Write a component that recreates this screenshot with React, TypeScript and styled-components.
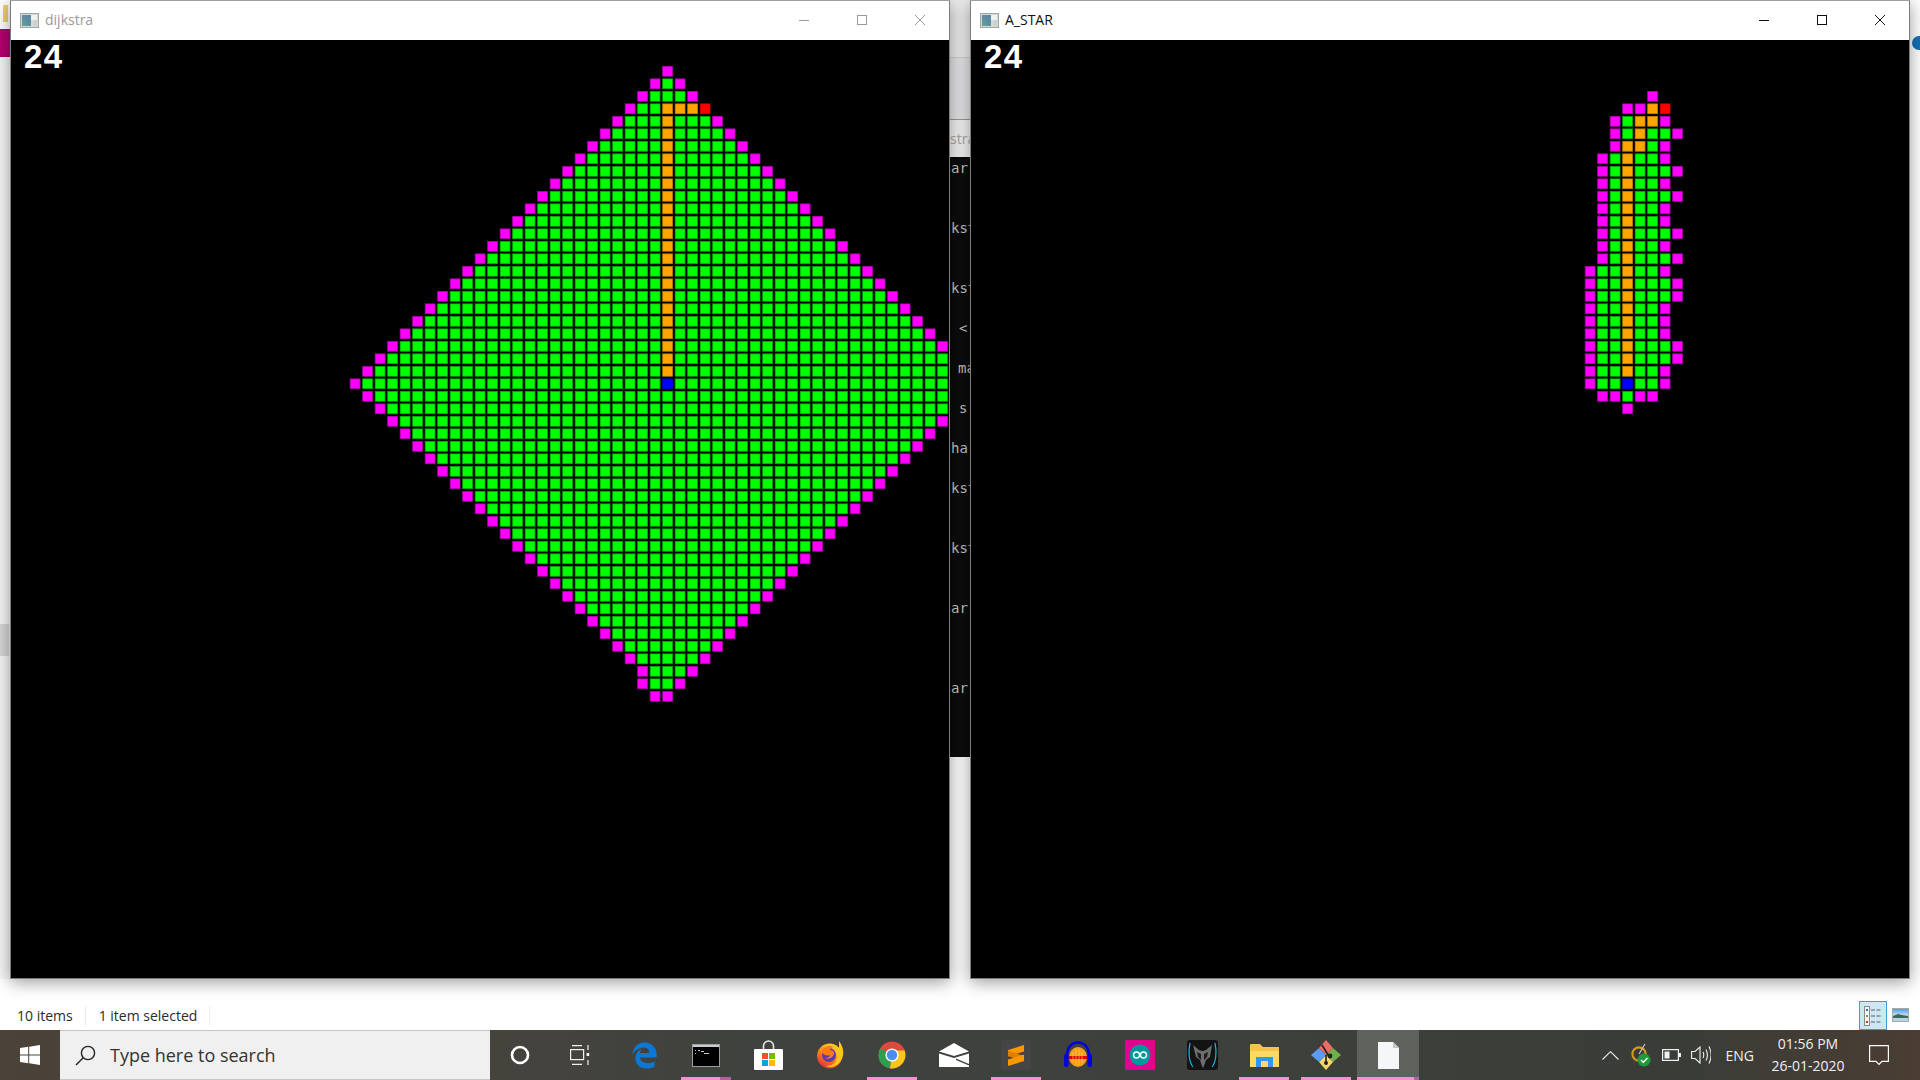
/***** IMPORTS *****/
import React from 'react';
import styled, { createGlobalStyle } from 'styled-components';
import { FaEdgeLegacy } from 'react-icons/fa6';


/***** DATA *****/
type Cell = 'M' | 'G' | 'O' | 'R' | 'B';
type Placed = { col: number; row: number; kind: Cell };

const CELL = 12.5;
const FILL: Record<Cell, string> = { M: '#ff00ff', G: '#00ff00', O: '#ffa500', R: '#ff0000', B: '#0000ff' };
const EDGE: Record<Cell, string> = { M: '#b000b0', G: '#00b000', O: '#c08000', R: '#d00000', B: '#0000d0' };

const dijkstraCells = (): Placed[] => {
    const cells: Placed[] = [];
    for (let row = 0; row < 75; row++) {
        for (let col = 0; col < 75; col++) {
            const dist = Math.abs(col - 52) + Math.abs(row - 27);
            let kind: Cell | null = dist < 25 ? 'G' : dist === 25 ? 'M' : null;
            if (col === 51 && row === 51) kind = 'G';
            if ((col === 50 && row === 51) || (col === 51 && row === 52)) kind = 'M';
            if (col === 52 && row >= 5 && row <= 26) kind = 'O';
            if ((col === 53 || col === 54) && row === 5) kind = 'O';
            if (col === 55 && row === 5) kind = 'R';
            if (col === 52 && row === 27) kind = 'B';
            if (kind) cells.push({ col, row, kind });
        }
    }
    return cells;
};

// rows 4 to 29, first character is column 49
const aStarRows = [
    '.....M..', '...MMOR.', '..MGOOM.', '..MGOGGM', '..MOOGM.', '.MGOGGM.', '.MGOGGGM',
    '.MGOGGM.', '.MGOGGGM', '.MGOGGM.', '.MGOGGM.', '.MGOGGGM', '.MGOGGM.', '.MGOGGGM',
    'MGGOGGM.', 'MGGOGGGM', 'MGGOGGGM', 'MGGOGGM.', 'MGGOGGM.', 'MGGOGGM.', 'MGGOGGGM',
    'MGGOGGGM', 'MGGOGGM.', 'MGGBGGM.', '.MMGMM..', '...M....',
];

const aStarCells = (): Placed[] => {
    const cells: Placed[] = [];
    aStarRows.forEach((line, r) => {
        line.split('').forEach((ch, c) => {
            if (ch !== '.') cells.push({ col: 49 + c, row: 4 + r, kind: ch as Cell });
        });
    });
    return cells;
};

const terminalLines = [
    { text: 'ar', gap: 0, indent: 1 },
    { text: 'kst', gap: 40, indent: 1 },
    { text: 'kst', gap: 40, indent: 1 },
    { text: '<', gap: 20, indent: 9 },
    { text: 'ma', gap: 20, indent: 8 },
    { text: 's', gap: 20, indent: 9 },
    { text: 'ha', gap: 20, indent: 1 },
    { text: 'kst', gap: 20, indent: 1 },
    { text: 'kst', gap: 40, indent: 1 },
    { text: 'ar', gap: 40, indent: 1 },
    { text: 'ar', gap: 60, indent: 1 },
];


/***** STYLES *****/
const GlobalStyle = createGlobalStyle`
    html, body {
        margin: 0;
        width: 1920px;
        height: 1080px;
        overflow: hidden;
        background: #fff;
    }
`;

const Screen = styled.div`
    width: 1920px;
    height: 1080px;
    display: flex;
    flex-direction: column;
    font-family: "Open Sans", "Noto Sans", sans-serif;
`;

const WindowRow = styled.div`
    display: flex;
    height: 979px;
`;

const LeftEdge = styled.div`
    width: 10px;
    display: flex;
    flex-direction: column;
    background: #f6f6f6;
`;

const EdgeTop = styled.div`
    height: 29px;
    background: #fff;
    padding: 5px 0 0 3px;
    box-sizing: border-box;
`;

const EdgeFolder = styled.div`
    width: 5px;
    height: 17px;
    background: #f3cf72;
`;

const EdgeTab = styled.div`
    height: 28px;
    background: #b5006e;
`;

const EdgeBlock = styled.div`
    height: 32px;
    margin-top: 567px;
    width: 9px;
    background: #d6d6d6;
`;

const Window = styled.div`
    position: relative;
    z-index: 1;
    width: 940px;
    flex: none;
    border: 1px solid #7d7d7d;
    border-top-color: #a0a0a0;
    box-sizing: border-box;
    background: #000;
    box-shadow: 0 3px 16px rgba(0, 0, 0, 0.4);
`;

const TitleBar = styled.div<{ $active?: boolean }>`
    height: 39px;
    background: #fff;
    display: flex;
    align-items: center;
    padding: 0 0 1px 9px;
    box-sizing: border-box;
    color: ${p => (p.$active ? '#111' : '#9a9a9a')};
    font-size: 14px;
`;

const TitleText = styled.span`
    margin: 0 0 2px 6px;
`;

const Caption = styled.div`
    margin-left: auto;
    display: flex;
`;

const CaptionButton = styled.div`
    width: 58px;
    height: 38px;
    display: flex;
    align-items: center;
    justify-content: center;
`;

const Client = styled.div`
    position: relative;
    width: 938px;
    height: 938px;
    overflow: hidden;
`;

const Score = styled.div`
    position: absolute;
    left: 13px;
    top: 0;
    color: #fff;
    letter-spacing: 1.5px;
    font: bold 33px/34px "Liberation Sans", sans-serif;
`;

const GapColumn = styled.div`
    width: 20px;
    flex: none;
    display: flex;
    flex-direction: column;
    overflow: hidden;
`;

const GapRibbon = styled.div`
    height: 57px;
    background: #ededed;
    border-bottom: 1px solid #cfcfcf;
`;

const GapRibbonLow = styled.div`
    height: 61px;
    background: #e6e6e8;
    border-bottom: 1px solid #9a9a9a;
`;

const GapCrumb = styled.div`
    height: 37px;
    background: #f4f4f4;
    color: #a8a8a8;
    font-size: 14px;
    line-height: 37px;
    white-space: nowrap;
    overflow: hidden;
`;

const Terminal = styled.div`
    height: 600px;
    background: #0c0c0c;
    padding-top: 1px;
    box-sizing: border-box;
    overflow: hidden;
    font: 14px/20px "DejaVu Sans Mono", monospace;
    color: #c4c4c4;
`;

const TermLine = styled.div<{ $gap: number; $indent: number }>`
    margin-top: ${p => p.$gap}px;
    padding-left: ${p => p.$indent}px;
    white-space: nowrap;
`;

const RightEdge = styled.div`
    width: 10px;
    background: #fff;
    overflow: hidden;
    padding: 36px 0 0 2px;
    box-sizing: border-box;
`;

const BlueDot = styled.div`
    width: 14px;
    height: 14px;
    border-radius: 50%;
    background: #1372b8;
`;

const StatusBar = styled.div`
    height: 51px;
    display: flex;
    color: #2b2b2b;
    font-size: 14px;
    padding: 0 11px 0 4px;
`;

const StatusItem = styled.div`
    align-self: flex-start;
    margin: 27px 0 0 13px;
    padding-right: 12px;
    line-height: 20px;
    border-right: 1px solid #eeeeee;
    white-space: nowrap;
`;

const ViewButtons = styled.div`
    margin-left: auto;
    display: flex;
    align-items: flex-end;
    gap: 5px;
`;

const ViewButton = styled.div<{ $on?: boolean }>`
    width: ${p => (p.$on ? '28px' : '17px')};
    height: ${p => (p.$on ? '29px' : '14px')};
    margin-bottom: ${p => (p.$on ? '0' : '8px')};
    box-sizing: border-box;
    display: flex;
    align-items: center;
    justify-content: center;
    background: ${p => (p.$on ? '#cce8f6' : '#fff')};
    border: 1px solid ${p => (p.$on ? '#3d9fd6' : '#a8a8a8')};
`;

const Taskbar = styled.div`
    height: 50px;
    display: flex;
    align-items: stretch;
    color: #f0f0f0;
    background: linear-gradient(90deg, #4b4239 0%, #46433d 25%, #3f423e 40%, #3c3f3a 70%, #3a3d37 88%, #4a3d33 100%);
`;

const StartButton = styled.div`
    width: 60px;
    flex: none;
    display: flex;
    align-items: center;
    justify-content: center;
`;

const SearchBox = styled.div`
    width: 430px;
    flex: none;
    box-sizing: border-box;
    display: flex;
    align-items: center;
    gap: 14px;
    padding-left: 15px;
    background: #f0f0f0;
    border-top: 1px solid #c6c6c6;
    border-bottom: 1px solid #c6c6c6;
    color: #333;
    font-size: 18px;
`;

const SystemSlot = styled.div`
    width: 60px;
    flex: none;
    display: flex;
    align-items: center;
    justify-content: center;
`;

const TaskGap = styled.div`
    width: 3px;
    flex: none;
`;

const TaskSlot = styled.div<{ $active?: boolean }>`
    position: relative;
    width: 62px;
    flex: none;
    display: flex;
    align-items: center;
    justify-content: center;
    background: ${p => (p.$active ? '#5f615c' : 'transparent')};
`;

const RunMark = styled.div<{ $full?: boolean; $stack?: boolean }>`
    position: absolute;
    bottom: 0;
    height: 3px;
    left: ${p => (p.$full ? '0' : '6px')};
    right: ${p => (p.$full ? '0' : '6px')};
    background: ${p =>
        p.$stack
            ? 'linear-gradient(90deg, #f88fd2 0 78%, #b560a0 78% 100%)'
            : p.$full
                ? 'linear-gradient(90deg, #f88fd2 0 92%, #b560a0 92% 100%)'
                : '#f88fd2'};
`;

const Tray = styled.div`
    margin-left: auto;
    display: flex;
    align-items: center;
    padding-right: 31px;
`;

const TrayIcon = styled.div<{ $left: number }>`
    margin-left: ${p => p.$left}px;
    display: flex;
    align-items: center;
`;

const TrayLang = styled.div`
    margin-left: 15px;
    font-size: 14px;
`;

const Clock = styled.div`
    margin-left: 16px;
    width: 76px;
    text-align: center;
    font-size: 14px;
    line-height: 22px;
    white-space: nowrap;
`;


/***** ICONS *****/
const WindowIcon = () => (
    <svg width="19" height="15" viewBox="0 0 19 15">
        <defs>
            <linearGradient id="wi" x1="0" y1="1" x2="1" y2="0">
                <stop offset="0" stopColor="#5aa78c" />
                <stop offset="0.7" stopColor="#5d86a8" />
            </linearGradient>
        </defs>
        <rect x="0.5" y="0.5" width="18" height="14" fill="#d4d8da" stroke="#a0a5a8" />
        <rect x="2" y="2" width="9" height="11" fill="url(#wi)" />
        <rect x="11" y="2" width="6" height="5" fill="#eef1ee" />
        <rect x="14" y="7" width="3" height="6" fill="#c9d4c8" />
    </svg>
);

const Minimize = ({ color }: { color: string }) => (
    <svg width="12" height="12" viewBox="0 0 12 12">
        <path d="M1 6.5h10" stroke={color} strokeWidth="1" />
    </svg>
);

const Maximize = ({ color }: { color: string }) => (
    <svg width="12" height="12" viewBox="0 0 12 12">
        <rect x="1.5" y="1.5" width="9" height="9" fill="none" stroke={color} />
    </svg>
);

const CloseX = ({ color }: { color: string }) => (
    <svg width="12" height="12" viewBox="0 0 12 12">
        <path d="M1 1l10 10M11 1L1 11" stroke={color} strokeWidth="1" />
    </svg>
);

const StartLogo = () => (
    <svg width="20" height="20" viewBox="0 0 20 20" fill="#fff">
        <path d="M0 3l8.2-1.2v7.7H0zM9.2 1.7L20 0v9.5H9.2zM0 10.5h8.2v7.7L0 17zM9.2 10.5H20V20L9.2 18.3z" />
    </svg>
);

const SearchIcon = () => (
    <svg width="21" height="21" viewBox="0 0 21 21" fill="none" stroke="#222" strokeWidth="1.4">
        <circle cx="13" cy="8" r="6.6" />
        <path d="M8.2 12.8L1 20" />
    </svg>
);

const CortanaIcon = () => (
    <svg width="20" height="20" viewBox="0 0 20 20" fill="none">
        <circle cx="10" cy="10" r="8" stroke="#fff" strokeWidth="2.6" />
    </svg>
);

const TaskViewIcon = () => (
    <svg width="20" height="20" viewBox="0 0 20 20" fill="none" stroke="#f2f2f2" strokeWidth="1.2">
        <path d="M2 0.6h10M2 19.4h10" />
        <rect x="0.6" y="4.6" width="13" height="10" />
        <path d="M18 0v5M18 15v5" />
        <rect x="16.6" y="8" width="2.6" height="3" fill="#f2f2f2" stroke="none" />
    </svg>
);

const CmdIcon = () => (
    <svg width="28" height="23" viewBox="0 0 28 23">
        <rect x="0.5" y="0.5" width="27" height="22" fill="#000" stroke="#9a9fa3" />
        <rect x="1" y="1" width="26" height="2" fill="#c9ccce" />
        <path d="M3 6h1v1H3zm0 3h1v1H3zm3-3h2v1H6zm3 1h3v1H9zm3 2h5v1h-5z" fill="#c8c8c8" />
    </svg>
);

const StoreIcon = () => (
    <svg width="29" height="30" viewBox="0 0 29 30">
        <path d="M9.5 9V6a5 5 0 0 1 10 0v3" fill="none" stroke="#e8e8e8" strokeWidth="1.6" />
        <rect x="0" y="9" width="29" height="21" rx="1" fill="#fff" />
        <rect x="8" y="13" width="6" height="6" fill="#f25022" />
        <rect x="15" y="13" width="6" height="6" fill="#7fba00" />
        <rect x="8" y="20" width="6" height="6" fill="#00a4ef" />
        <rect x="15" y="20" width="6" height="6" fill="#ffb900" />
    </svg>
);

const FirefoxIcon = () => (
    <svg width="28" height="28" viewBox="0 0 28 28">
        <defs>
            <linearGradient id="ff" x1="0.8" y1="0" x2="0.2" y2="1">
                <stop offset="0" stopColor="#ffe226" />
                <stop offset="0.5" stopColor="#ff8a16" />
                <stop offset="1" stopColor="#e8233c" />
            </linearGradient>
        </defs>
        <circle cx="13.5" cy="15" r="12.5" fill="url(#ff)" />
        <circle cx="13" cy="14" r="7" fill="#5a3bb0" />
        <path d="M23 0c5 6 6 15 1 21-4 5-10 6-14 4 6 0 11-3 11-9 0-4-3-8-3-11 2 1 4 2 5 4 0-3 0-6 0-9z" fill="#ffc21e" />
        <path d="M6 9c3-4 8-5 12-3-3 0-4 2-4 3 2 0 4 1 4 3 0 4-5 7-9 5 3 0 5-1 5-3-3 1-7 0-8-3z" fill="#ff7a18" />
    </svg>
);

const ChromeIcon = () => (
    <svg width="28" height="28" viewBox="0 0 28 28">
        <circle cx="14" cy="14" r="13.5" fill="#dd4a3c" />
        <path d="M14 14L2.3 7.2A13.5 13.5 0 0 0 12 27.4z" fill="#2f9e4f" />
        <path d="M14 14L12 27.4A13.5 13.5 0 0 0 26.6 9.4H14z" fill="#f8c51c" />
        <circle cx="14" cy="14" r="6.6" fill="#fff" />
        <circle cx="14" cy="14" r="5.2" fill="#4a8cf0" />
    </svg>
);

const MailIcon = () => (
    <svg width="30" height="24" viewBox="0 0 30 24">
        <path d="M15 0L30 8.5 15 13 0 8.5z" fill="#fff" />
        <path d="M0 10.5L15 15 30 10.5V24H0z" fill="#fff" />
        <path d="M17 15.5L30 21v1.5L17 17z" fill="#3c403c" />
    </svg>
);

const SublimeIcon = () => (
    <svg width="30" height="30" viewBox="0 0 30 30">
        <rect width="30" height="30" rx="3" fill="#464545" />
        <path d="M23 5v6.5L7 16.5V10z" fill="#ff9800" />
        <path d="M7 10.5l16 5.5v5.5L7 16z" fill="#e07f00" />
        <path d="M23 14.5V21L7 26v-6.5z" fill="#ff9800" />
    </svg>
);

const AudacityIcon = () => (
    <svg width="30" height="30" viewBox="0 0 30 30">
        <path d="M4 16C4 8 8 2.5 15 2.5S26 8 26 16" fill="none" stroke="#0000e0" strokeWidth="2.6" />
        <rect x="1" y="14" width="4.5" height="13" rx="2" fill="#0000e0" />
        <rect x="24.5" y="14" width="4.5" height="13" rx="2" fill="#0000e0" />
        <ellipse cx="15" cy="17" rx="9" ry="10" fill="#f0a020" />
        <path d="M6 17.5h18" stroke="#e00000" strokeWidth="3" />
        <path d="M10 12v11M13 9v16M16 9v16M19 12v11" stroke="#ffd040" strokeWidth="1" opacity="0.7" />
    </svg>
);

const ArduinoIcon = () => (
    <svg width="30" height="30" viewBox="0 0 30 30">
        <rect width="30" height="30" fill="#e0058c" />
        <circle cx="15" cy="15" r="10.5" fill="#00979d" />
        <g fill="none" stroke="#fff" strokeWidth="1.4">
            <circle cx="11.5" cy="15" r="3" />
            <circle cx="18.5" cy="15" r="3" />
        </g>
    </svg>
);

const PredatorIcon = () => (
    <svg width="31" height="30" viewBox="0 0 31 30">
        <rect width="31" height="30" rx="3" fill="#131313" />
        <path d="M3 3C1 12 2 22 6 27" fill="none" stroke="#11b8e0" strokeWidth="1.2" />
        <path d="M28 3C30 12 29 22 25 27" fill="none" stroke="#11b8e0" strokeWidth="1.2" />
        <path d="M6 5l6 5 3 1 1 0 3-1 6-5-2 12-4 3-2 6-1 2-1-2-2-6-4-3z" fill="#6d6d6d" />
        <path d="M10 12l4 2 0 6-3-3zM21 12l-4 2 0 6 3-3z" fill="#1c1c1c" />
    </svg>
);

const FolderIcon = () => (
    <svg width="29" height="26" viewBox="0 0 29 26">
        <path d="M0 3a1 1 0 0 1 1-1h9l3 3h16v20H0z" fill="#f5c54b" />
        <path d="M0 9h29v16H0z" fill="#ffd966" />
        <rect x="6" y="15" width="17" height="4" fill="#2f9be8" />
        <rect x="6" y="19" width="5" height="6" fill="#2f9be8" />
        <rect x="18" y="19" width="5" height="6" fill="#2f9be8" />
    </svg>
);

const GitIcon = () => (
    <svg width="30" height="30" viewBox="0 0 30 30">
        <path d="M15 0l7 8-7 7-7-7z" fill="#ef6a62" />
        <path d="M22 8l8 7-8 7-7-7z" fill="#6fb04a" />
        <path d="M15 15l7 7-7 8-7-8z" fill="#f4d969" />
        <path d="M8 8l7 7-7 7-8-7z" fill="#5b9cf2" />
        <path d="M11 5l8 13M15 15v8" stroke="#222" strokeWidth="1.6" />
        <circle cx="19" cy="16" r="2.4" fill="#222" />
        <circle cx="15" cy="23" r="2" fill="#222" />
    </svg>
);

const FileIcon = () => (
    <svg width="21" height="27" viewBox="0 0 21 27">
        <path d="M0 0h15l6 6v21H0z" fill="#f5f6f7" />
        <path d="M15 0l6 6h-6z" fill="#c4c6c8" />
    </svg>
);

const Chevron = () => (
    <svg width="17" height="9" viewBox="0 0 17 9" fill="none" stroke="#f0f0f0" strokeWidth="1.1">
        <path d="M0.5 8.5L8.5 0.7l8 7.8" />
    </svg>
);

const CheckBadge = () => (
    <svg width="20" height="25" viewBox="0 0 20 25">
        <circle cx="8" cy="11" r="6.6" fill="none" stroke="#d09a1f" strokeWidth="2.2" />
        <path d="M8 11l6-10" stroke="#c8c8c8" strokeWidth="1.2" />
        <circle cx="13" cy="17" r="6.5" fill="#1f9a3c" />
        <path d="M10 17l2.3 2.3L16.5 15" fill="none" stroke="#fff" strokeWidth="1.4" />
    </svg>
);

const Battery = () => (
    <svg width="19" height="12" viewBox="0 0 19 12">
        <rect x="0.6" y="0.6" width="15.8" height="10.8" fill="none" stroke="#f0f0f0" strokeWidth="1.2" />
        <rect x="2.5" y="2.5" width="5" height="7" fill="#f0f0f0" />
        <rect x="17" y="4" width="2" height="4" fill="#f0f0f0" />
    </svg>
);

const Speaker = () => (
    <svg width="20" height="20" viewBox="0 0 20 20" fill="none" stroke="#f0f0f0" strokeWidth="1.1">
        <path d="M0.6 6.5h3.5L9 2v16l-4.9-4.5H0.6z" />
        <path d="M12 7c1 2 1 4 0 6M15 4.5c1.8 3.5 1.8 7.5 0 11M18 1.5c2.5 5 2.5 12 0 17" />
    </svg>
);

const NotifyIcon = () => (
    <svg width="20" height="21" viewBox="0 0 20 21" fill="none" stroke="#fff" strokeWidth="1.2">
        <path d="M0.6 0.6h18.8v15.8h-6.4l-3 3-3-3H0.6z" />
    </svg>
);

const DetailsIcon = () => (
    <svg width="18" height="20" viewBox="0 0 18 20">
        <rect x="0.5" y="0.5" width="5" height="19" fill="#f4f4f4" stroke="#8a8a8a" />
        <rect x="2" y="3" width="2" height="2" fill="#3a6ea5" />
        <rect x="2" y="9" width="2" height="2" fill="#8a9a2a" />
        <rect x="2" y="15" width="2" height="2" fill="#c03a2a" />
        <path d="M7 4h4M12.5 4h4M7 10h4M12.5 10h4M7 16h4M12.5 16h4" stroke="#5a5a5a" />
    </svg>
);

const PreviewIcon = () => (
    <svg width="15" height="12" viewBox="0 0 15 12">
        <defs>
            <linearGradient id="sky" x1="0" y1="0" x2="0" y2="1">
                <stop offset="0" stopColor="#4f9fe0" />
                <stop offset="1" stopColor="#cfe6f5" />
            </linearGradient>
        </defs>
        <rect width="15" height="7" fill="url(#sky)" />
        <path d="M0 7l5-2 4 1 6 1v2H0z" fill="#3f6a5a" />
        <rect y="9" width="15" height="3" fill="#b5d6e6" />
    </svg>
);

const Board = ({ cells }: { cells: Placed[] }) => (
    <svg width="938" height="938" viewBox="0 0 938 938" style={{ display: 'block' }}>
        {cells.map(cell => (
            <rect
                key={cell.col + '-' + cell.row}
                x={cell.col * CELL + 1.7}
                y={cell.row * CELL + 1.4}
                width={9.8}
                height={9.8}
                fill={FILL[cell.kind]}
                stroke={EDGE[cell.kind]}
                strokeWidth={0.8}
            />
        ))}
    </svg>
);


/***** COMPONENT-FUNCTION *****/
const GameWindow = ({ title, active, cells }: { title: string; active?: boolean; cells: Placed[] }) => {
    const color = active ? '#111' : '#9a9a9a';
    return (
        <Window>
            <TitleBar $active={active}>
                <WindowIcon />
                <TitleText>{title}</TitleText>
                <Caption>
                    <CaptionButton><Minimize color={color} /></CaptionButton>
                    <CaptionButton><Maximize color={color} /></CaptionButton>
                    <CaptionButton><CloseX color={color} /></CaptionButton>
                </Caption>
            </TitleBar>
            <Client>
                <Board cells={cells} />
                <Score>24</Score>
            </Client>
        </Window>
    );
};

const App = () => {

    /*** Variables ***/
    const leftCells = dijkstraCells();
    const rightCells = aStarCells();

    /*** Return-statement ***/
    return (
        <Screen>
            <GlobalStyle />
            <WindowRow>
                <LeftEdge>
                    <EdgeTop><EdgeFolder /></EdgeTop>
                    <EdgeTab />
                    <EdgeBlock />
                </LeftEdge>
                <GameWindow title="dijkstra" cells={leftCells} />
                <GapColumn>
                    <GapRibbon />
                    <GapRibbonLow />
                    <GapCrumb>stra</GapCrumb>
                    <Terminal>
                        {terminalLines.map((line, i) => (
                            <TermLine key={i} $gap={line.gap} $indent={line.indent}>{line.text}</TermLine>
                        ))}
                    </Terminal>
                </GapColumn>
                <GameWindow title="A_STAR" active cells={rightCells} />
                <RightEdge><BlueDot /></RightEdge>
            </WindowRow>
            <StatusBar>
                <StatusItem>10 items</StatusItem>
                <StatusItem>1 item selected</StatusItem>
                <ViewButtons>
                    <ViewButton $on><DetailsIcon /></ViewButton>
                    <ViewButton><PreviewIcon /></ViewButton>
                </ViewButtons>
            </StatusBar>
            <Taskbar>
                <StartButton><StartLogo /></StartButton>
                <SearchBox><SearchIcon />Type here to search</SearchBox>
                <SystemSlot><CortanaIcon /></SystemSlot>
                <SystemSlot><TaskViewIcon /></SystemSlot>
                <TaskGap />
                <TaskSlot><FaEdgeLegacy size={27} color="#0a78d4" /></TaskSlot>
                <TaskSlot><CmdIcon /><RunMark $stack /></TaskSlot>
                <TaskSlot><StoreIcon /></TaskSlot>
                <TaskSlot><FirefoxIcon /></TaskSlot>
                <TaskSlot><ChromeIcon /><RunMark /></TaskSlot>
                <TaskSlot><MailIcon /></TaskSlot>
                <TaskSlot><SublimeIcon /><RunMark /></TaskSlot>
                <TaskSlot><AudacityIcon /></TaskSlot>
                <TaskSlot><ArduinoIcon /></TaskSlot>
                <TaskSlot><PredatorIcon /></TaskSlot>
                <TaskSlot><FolderIcon /><RunMark /></TaskSlot>
                <TaskSlot><GitIcon /><RunMark /></TaskSlot>
                <TaskSlot $active><FileIcon /><RunMark $full /></TaskSlot>
                <Tray>
                    <TrayIcon $left={0}><Chevron /></TrayIcon>
                    <TrayIcon $left={12}><CheckBadge /></TrayIcon>
                    <TrayIcon $left={11}><Battery /></TrayIcon>
                    <TrayIcon $left={10}><Speaker /></TrayIcon>
                    <TrayLang>ENG</TrayLang>
                    <Clock>01:56 PM<br />26-01-2020</Clock>
                    <TrayIcon $left={23}><NotifyIcon /></TrayIcon>
                </Tray>
            </Taskbar>
        </Screen>
    );
};


/***** EXPORTS *****/
export default App;
